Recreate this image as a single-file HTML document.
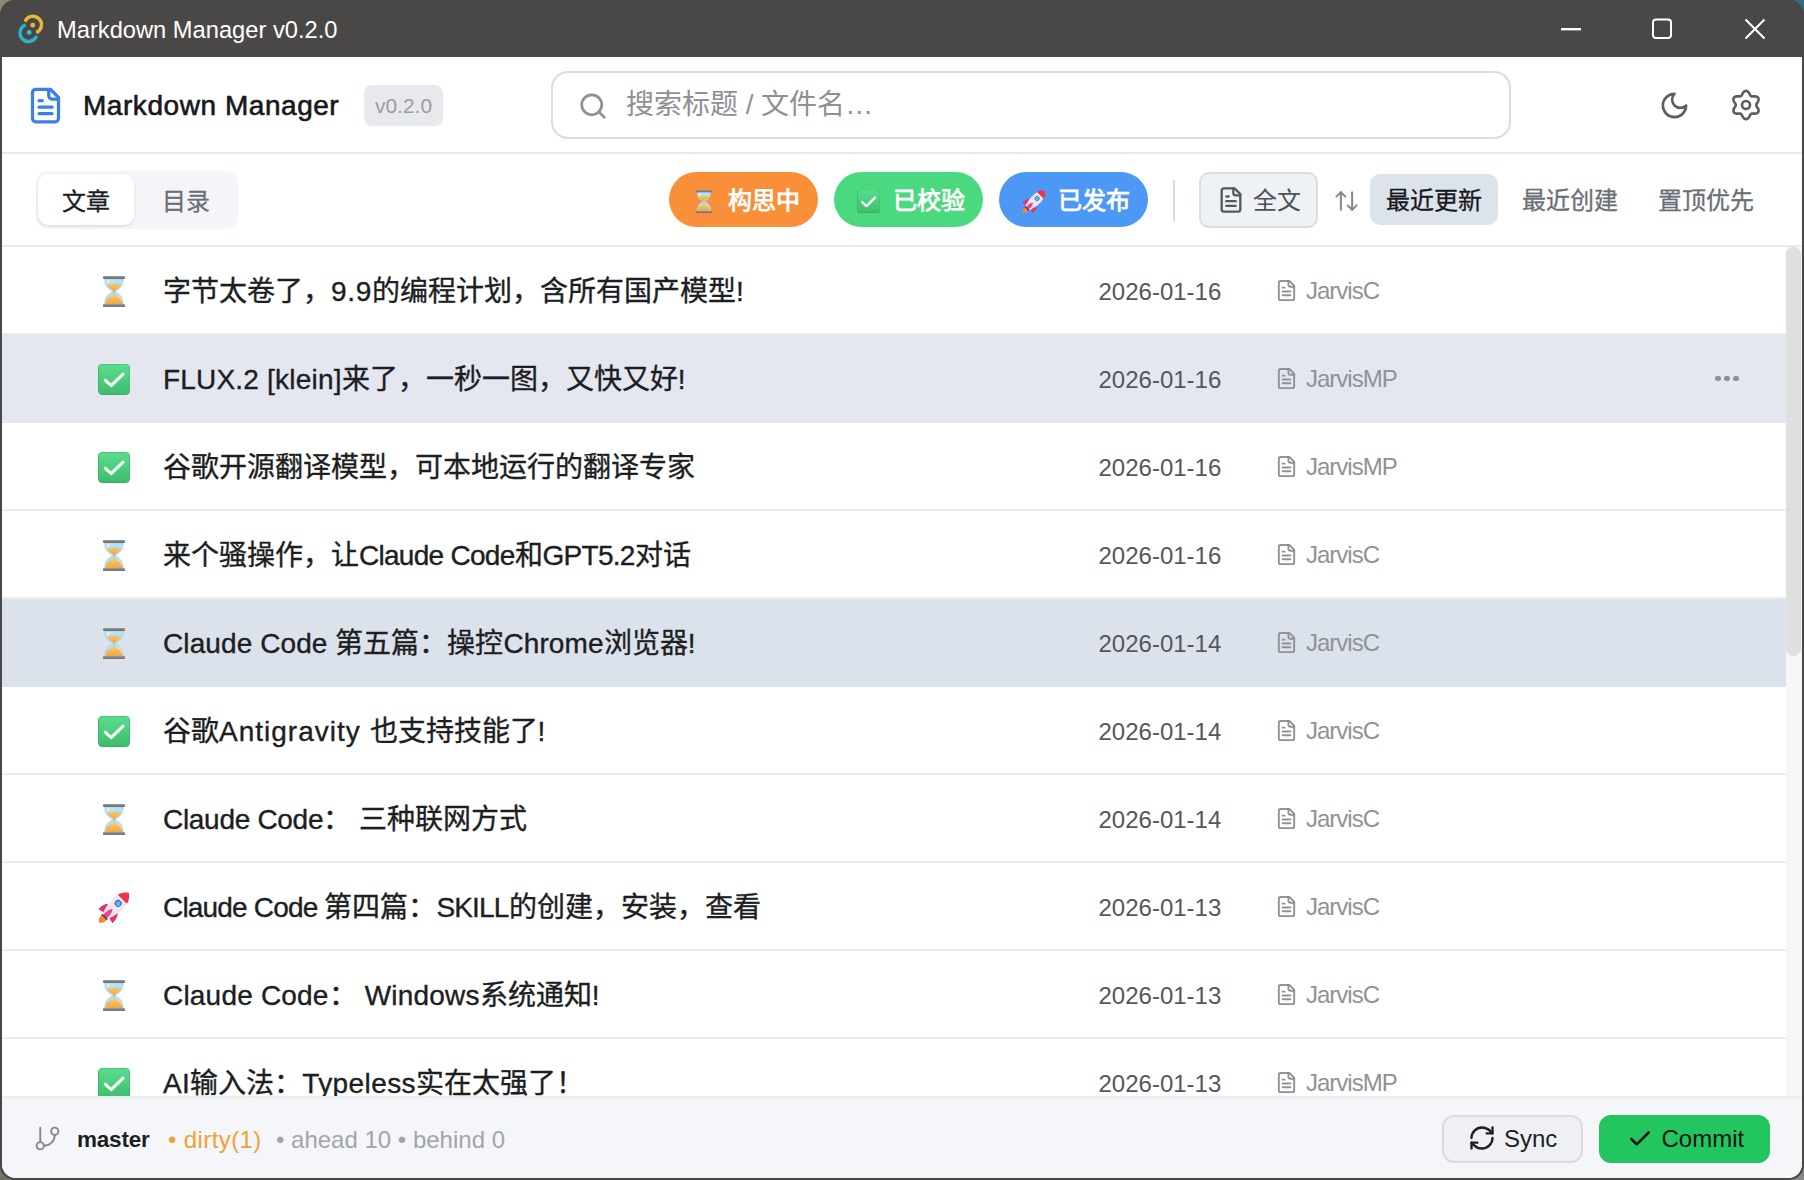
<!DOCTYPE html>
<html lang="zh-CN"><head><meta charset="utf-8">
<style>
*{box-sizing:border-box;margin:0;padding:0}
html,body{width:1804px;height:1180px;overflow:hidden}
body{background:#7d7a72;font-family:"Liberation Sans",sans-serif;position:relative}
.abs{position:absolute}
#win{position:absolute;left:0;top:0;width:1804px;height:1180px;background:#4a4846;border-radius:15px;overflow:hidden}
.cor{position:absolute;width:20px;height:20px}
#title{position:absolute;left:0;top:0;width:1804px;height:57px;background:#4a4846}
#title .t{position:absolute;left:57px;top:15px;font-size:23.7px;color:#fff;line-height:30px;white-space:nowrap}
#app{position:absolute;left:2px;top:57px;width:1800px;height:1121px;background:#fff;border-radius:0 0 14px 14px;overflow:hidden}
#hdr{position:absolute;left:0;top:0;width:1800px;height:97px;border-bottom:2px solid #e8e9eb}
#hdr .logo{position:absolute;left:24px;top:28.5px;width:39px;height:39px}
#hdr .name{position:absolute;left:81px;top:30px;font-size:28px;line-height:38px;font-weight:normal;-webkit-text-stroke:0.6px #16181c;color:#16181c;white-space:nowrap;letter-spacing:0.55px}
#hdr .badge{position:absolute;left:362px;top:28px;width:79px;height:41px;border-radius:8px;background:#e7e9ed;color:#9a9da3;font-size:21px;line-height:41px;text-align:center}
#search{position:absolute;left:549px;top:14px;width:960px;height:68px;border:2px solid #dcdcdc;border-radius:17px}
#search svg{position:absolute;left:24.5px;top:17.5px;width:30px;height:30px}
#search .ph{position:absolute;left:73px;top:14px;font-size:28px;line-height:36px;color:#8e9094;white-space:nowrap}
#hdr .moon{position:absolute;left:1656.5px;top:32.5px;width:31px;height:31px}
#hdr .gear{position:absolute;left:1728px;top:31.5px;width:32px;height:32px}
#tb{position:absolute;left:0;top:97px;width:1800px;height:93px;border-bottom:2px solid #eaebed}
.seg{position:absolute;left:33.5px;top:16.5px;width:202px;height:58px;border-radius:12px;background:#f4f5f8}
.seg .on{position:absolute;left:2px;top:3.5px;width:96.5px;height:51px;border-radius:10px;background:#fff;box-shadow:0 1px 3px rgba(0,0,0,.12)}
.seg .l1{position:absolute;left:26.5px;top:15.5px;font-size:24px;line-height:32px;color:#1b1d21;-webkit-text-stroke:0.3px #1b1d21}
.seg .l2{position:absolute;left:126.5px;top:15.5px;font-size:24px;line-height:32px;color:#6a6e75;-webkit-text-stroke:0.3px #6a6e75}
.pill{position:absolute;top:18px;width:149px;height:55px;border-radius:28px;color:#fff;font-weight:bold;font-size:24px;line-height:55px}
.pill svg{position:absolute}
.pill span{position:absolute;top:1px}
.sep{position:absolute;left:1171px;top:26px;width:2px;height:41px;background:#dadada}
.full{position:absolute;left:1197px;top:18px;width:119px;height:56px;border-radius:10px;background:#eef1f5;border:2px solid #d9dce1}
.full svg{position:absolute;left:16px;top:12px;width:28px;height:28px}
.full span{position:absolute;left:52px;top:11px;font-size:24px;line-height:32px;color:#4d5056}
.sorti{position:absolute;left:1331.3px;top:35.8px;width:27px;height:22px}
.sort{position:absolute;top:20px;height:51px;font-size:24px;line-height:53px;color:#6a6e75;white-space:nowrap;-webkit-text-stroke:0.3px #6a6e75}
.sort.on{background:#dde3eb;border-radius:10px;color:#17191d;padding:0 16px;-webkit-text-stroke:0.3px #17191d}
#list{position:absolute;left:0;top:190px;width:1784px;height:850px;overflow:hidden}
.row{position:absolute;left:0;width:1784px;height:88px;border-bottom:2px solid #ebecee}
.row.hla{background:#e4e7f0;border-bottom-color:#e4e7f0}
.row.hlb{background:#dce2eb;border-bottom-color:#dce2eb}
.row .ic{position:absolute;top:29px;height:31px}
.row .ic-hg{left:101px;width:22px}
.row .ic-ck{left:96px;width:32px}
.row .ic-rk{left:96px;width:32px}
.row .tt{position:absolute;left:161px;top:25px;font-size:28px;line-height:40px;color:#1c1e22;white-space:nowrap;-webkit-text-stroke:0.35px #1c1e22}
.row .dt{position:absolute;left:1096.5px;top:27.5px;font-size:24px;line-height:34px;color:#54575c;white-space:nowrap}
.row .au{position:absolute;left:1304px;top:27px;font-size:24px;line-height:34px;color:#8f9297;white-space:nowrap;letter-spacing:-1px}
.row .fi{position:absolute;left:1272.5px;top:31.5px;width:23px;height:23px;color:#8e9196}
.row .more{position:absolute;left:1711px;top:40.5px;width:30px;height:8px}
.row .more i{position:absolute;top:0;width:5.5px;height:5.5px;border-radius:3px;background:#8c9096}
.row .more i:nth-child(1){left:2px}.row .more i:nth-child(2){left:11px}.row .more i:nth-child(3){left:20px}
#sb{position:absolute;left:1784px;top:190px;width:16px;height:850px;background:#f6f6f9}
#sb i{position:absolute;left:0;top:0;width:15px;height:409px;border-radius:8px;background:#dfdfdf}
#foot{position:absolute;left:0;top:1039px;width:1800px;height:82px;background:#f5f6f9;border-top:2px solid #ebecef}
#foot .br{position:absolute;left:30.5px;top:25.5px;width:29px;height:29px}
#foot .m{position:absolute;left:75px;top:26px;font-size:22.5px;letter-spacing:-0.2px;line-height:32px;font-weight:bold;color:#1c1e22;white-space:nowrap}
#foot .d{position:absolute;left:166px;top:26px;font-size:24px;line-height:32px;color:#eea236;white-space:nowrap;letter-spacing:0.4px}
#foot .a{position:absolute;left:274px;top:26px;font-size:24px;line-height:32px;color:#a2a5aa;white-space:nowrap}
.btn{position:absolute;top:17px;height:48px;border-radius:12px;font-size:24px;line-height:44px;white-space:nowrap}
.btn.sync{left:1440px;width:141px;background:#eef0f4;border:2px solid #d9dce1;color:#1c1e22}
.btn.commit{left:1597px;width:171px;background:#22c55e;border:2px solid #22c55e;color:#14161a}
.btn svg{position:absolute;top:9px;width:26px;height:26px}
.btn span{position:absolute;top:0}
svg{overflow:visible}

</style></head><body>
<svg width="0" height="0" style="position:absolute"><defs>
<symbol id="ft" viewBox="0 0 24 24"><g fill="none" stroke="currentColor" stroke-width="2" stroke-linecap="round" stroke-linejoin="round"><path d="M15 2H6a2 2 0 0 0-2 2v16a2 2 0 0 0 2 2h12a2 2 0 0 0 2-2V7Z"/><path d="M14 2v4a2 2 0 0 0 2 2h4"/><path d="M10 9H8"/><path d="M16 13H8"/><path d="M16 17H8"/></g></symbol>
<linearGradient id="gck" x1="0" y1="0" x2="0" y2="1"><stop offset="0" stop-color="#5cdc8e"/><stop offset="1" stop-color="#3dbd6d"/></linearGradient>
<linearGradient id="gcap" x1="0" y1="0" x2="0" y2="1"><stop offset="0" stop-color="#9a9a9a"/><stop offset="1" stop-color="#6a6a6a"/></linearGradient>
<linearGradient id="gsand" x1="0" y1="0" x2="0" y2="1"><stop offset="0" stop-color="#f9c766"/><stop offset="1" stop-color="#f0a748"/></linearGradient>
<symbol id="hg" viewBox="0 0 22 31">
 <path d="M1.8 2.8 H20.2 V4.5 C20.2 10 16.8 13 12.2 15.5 C16.8 18 20.2 21 20.2 26.5 V28.2 H1.8 V26.5 C1.8 21 5.2 18 9.8 15.5 C5.2 13 1.8 10 1.8 4.5Z" fill="#b3e0fa" stroke="#a5cde6" stroke-width="0.5"/>
 <path d="M3.6 4 H8 C6 6 5 9 4.5 10 C4 8 3.6 6 3.6 4Z" fill="#def3ff" opacity=".8"/>
 <path d="M3.6 8.3 C8 7.5 14 7.5 18.4 8.3 C17.2 11 14.4 13 11 15 C7.6 13 4.8 11 3.6 8.3Z" fill="url(#gsand)"/>
 <rect x="10.6" y="14" width="0.8" height="6.5" fill="#eaa544"/>
 <path d="M2.4 28 C2.4 23.5 5.2 20.6 11 18.8 C16.8 20.6 19.6 23.5 19.6 28Z" fill="url(#gsand)"/>
 <path d="M14.5 20.2 C17 21.6 18.6 23.4 19.1 25.5" fill="none" stroke="#fff" stroke-width="1" opacity=".55"/>
 <rect x="0" y="0" width="22" height="2.9" rx="0.8" fill="url(#gcap)"/>
 <rect x="0" y="28.1" width="22" height="2.9" rx="0.8" fill="url(#gcap)"/>
</symbol>
<symbol id="ck" viewBox="0 0 32 31">
 <rect x="0" y="0" width="32" height="31" rx="4.5" fill="#37ad62"/>
 <rect x="0.8" y="0.4" width="30.8" height="29.6" rx="4" fill="url(#gck)"/>
 <path d="M7.3 16.3 L13.2 21.6 L25 10.2" fill="none" stroke="#f2fff6" stroke-width="3.2" stroke-linecap="round" stroke-linejoin="round"/>
</symbol>
<symbol id="rk" viewBox="0 0 32 31">
 <g transform="translate(16.6 15) rotate(45)">
  <path d="M-3.5 14.5 C-4 18.5 -1.5 21.5 0 22 C1.5 21.5 4 18.5 3.5 14.5Z" fill="#f28a2c"/>
  <path d="M-6.5 2 C-9 4.5 -10 8 -10 13 L-3.5 11.5Z" fill="#e3336c"/>
  <path d="M6.5 2 C9 4.5 10 8 10 13 L3.5 11.5Z" fill="#e3336c"/>
  <path d="M0 -20 C5 -17 7 -10 7 -3 C7 4 5.2 9 3.8 13.5 L-3.8 13.5 C-5.2 9 -7 4 -7 -3 C-7 -10 -5 -17 0 -20Z" fill="#efe7f0"/>
  <path d="M0 -20 C4 -17.5 5.8 -14 6.4 -11 L-6.4 -11 C-5.8 -14 -4 -17.5 0 -20Z" fill="#ea3450"/>
  <circle cx="0" cy="-5" r="2.9" fill="#62b6f5" stroke="#3060a8" stroke-width="1"/>
  <path d="M0 3 C2.2 5 2.8 9 2.5 14 L-2.5 14 C-2.8 9 -2.2 5 0 3Z" fill="#f0428f"/>
  <rect x="-3.8" y="13.3" width="7.6" height="1.6" fill="#7a2b50"/>
 </g>
</symbol>
</defs>
</svg>
<div class="cor" style="left:0;top:0;background:#8e8776"></div>
<div class="cor" style="right:0;top:0;background:#2f6d84"></div>
<div class="cor" style="left:0;bottom:0;background:#74716a"></div>
<div class="cor" style="right:0;bottom:0;background:#8a8985"></div>
<div id="win">
<div id="title">
  <svg class="abs" style="left:0;top:0" width="60" height="57" viewBox="0 0 60 57">
    <path d="M25.1 21.6 A8.5 8.5 0 1 1 36.3 32.6" fill="none" stroke="#e8b83a" stroke-width="3.4"/>
    <path d="M25.65 24.96 A8.5 8.5 0 1 0 36.5 35.9" fill="none" stroke="#27b4cc" stroke-width="3.4"/>
    <circle cx="32.8" cy="25.2" r="2.4" fill="#f0b82e"/>
    <circle cx="29.2" cy="32.4" r="2.4" fill="#2cc0d8"/>
  </svg>
  <div class="t">Markdown Manager v0.2.0</div>
  <svg class="abs" style="left:1556px;top:14px" width="30" height="30" viewBox="0 0 30 30"><rect x="5" y="14" width="20" height="2.4" fill="#fff"/></svg>
  <svg class="abs" style="left:1647px;top:14px" width="30" height="30" viewBox="0 0 30 30"><rect x="6" y="5.5" width="18" height="18.5" rx="3" fill="none" stroke="#fff" stroke-width="2"/></svg>
  <svg class="abs" style="left:1740px;top:14px" width="30" height="30" viewBox="0 0 30 30"><path d="M5.5 5.5 L24.5 24.5 M24.5 5.5 L5.5 24.5" stroke="#fff" stroke-width="2"/></svg>
</div>
<div id="app">
  <div id="hdr">
    <svg class="logo" viewBox="0 0 24 24" style="color:#3d7fe8"><use href="#ft"/></svg>
    <div class="name">Markdown Manager</div>
    <div class="badge">v0.2.0</div>
    <div id="search">
      <svg viewBox="0 0 24 24"><g fill="none" stroke="#8e9094" stroke-width="2.2" stroke-linecap="round"><circle cx="11" cy="11" r="8"/><path d="m21 21-4.3-4.3"/></g></svg>
      <div class="ph">搜索标题 / 文件名…</div>
    </div>
    <svg class="moon" viewBox="0 0 24 24"><path d="M12 3a6 6 0 0 0 9 9 9 9 0 1 1-9-9Z" fill="none" stroke="#5c5e62" stroke-width="2" stroke-linejoin="round"/></svg>
    <svg class="gear" viewBox="0 0 24 24"><g fill="none" stroke="#5c5e62" stroke-width="2" stroke-linejoin="round"><path d="M19.70 12.00 L19.73 12.27 L19.81 12.55 L19.93 12.83 L20.10 13.14 L20.30 13.46 L20.51 13.81 L20.73 14.18 L20.94 14.56 L21.13 14.97 L21.28 15.38 L21.38 15.79 L21.43 16.20 L21.41 16.59 L21.33 16.96 L21.18 17.30 L20.96 17.60 L20.68 17.86 L20.35 18.07 L19.97 18.23 L19.56 18.35 L19.13 18.42 L18.69 18.46 L18.25 18.47 L17.82 18.47 L17.42 18.45 L17.04 18.45 L16.69 18.45 L16.38 18.49 L16.10 18.56 L15.85 18.67 L15.63 18.83 L15.43 19.03 L15.24 19.29 L15.06 19.58 L14.88 19.92 L14.69 20.28 L14.48 20.65 L14.25 21.03 L14.00 21.39 L13.71 21.72 L13.41 22.02 L13.08 22.27 L12.73 22.45 L12.37 22.56 L12.00 22.60 L11.63 22.56 L11.27 22.45 L10.92 22.27 L10.59 22.02 L10.29 21.72 L10.00 21.39 L9.75 21.03 L9.52 20.65 L9.31 20.28 L9.12 19.92 L8.94 19.58 L8.76 19.29 L8.57 19.03 L8.37 18.83 L8.15 18.67 L7.90 18.56 L7.62 18.49 L7.31 18.45 L6.96 18.45 L6.58 18.45 L6.18 18.47 L5.75 18.47 L5.31 18.46 L4.87 18.42 L4.44 18.35 L4.03 18.23 L3.65 18.07 L3.32 17.86 L3.04 17.60 L2.82 17.30 L2.67 16.96 L2.59 16.59 L2.57 16.20 L2.62 15.79 L2.72 15.38 L2.87 14.97 L3.06 14.56 L3.27 14.18 L3.49 13.81 L3.70 13.46 L3.90 13.14 L4.07 12.83 L4.19 12.55 L4.27 12.27 L4.30 12.00 L4.27 11.73 L4.19 11.45 L4.07 11.17 L3.90 10.86 L3.70 10.54 L3.49 10.19 L3.27 9.82 L3.06 9.44 L2.87 9.03 L2.72 8.62 L2.62 8.21 L2.57 7.80 L2.59 7.41 L2.67 7.04 L2.82 6.70 L3.04 6.40 L3.32 6.14 L3.65 5.93 L4.03 5.77 L4.44 5.65 L4.87 5.58 L5.31 5.54 L5.75 5.53 L6.18 5.53 L6.58 5.55 L6.96 5.55 L7.31 5.55 L7.62 5.51 L7.90 5.44 L8.15 5.33 L8.37 5.17 L8.57 4.97 L8.76 4.71 L8.94 4.42 L9.12 4.08 L9.31 3.72 L9.52 3.35 L9.75 2.97 L10.00 2.61 L10.29 2.28 L10.59 1.98 L10.92 1.73 L11.27 1.55 L11.63 1.44 L12.00 1.40 L12.37 1.44 L12.73 1.55 L13.08 1.73 L13.41 1.98 L13.71 2.28 L14.00 2.61 L14.25 2.97 L14.48 3.35 L14.69 3.72 L14.88 4.08 L15.06 4.42 L15.24 4.71 L15.43 4.97 L15.63 5.17 L15.85 5.33 L16.10 5.44 L16.38 5.51 L16.69 5.55 L17.04 5.55 L17.42 5.55 L17.82 5.53 L18.25 5.53 L18.69 5.54 L19.13 5.58 L19.56 5.65 L19.97 5.77 L20.35 5.93 L20.68 6.14 L20.96 6.40 L21.18 6.70 L21.33 7.04 L21.41 7.41 L21.43 7.80 L21.38 8.21 L21.28 8.62 L21.13 9.03 L20.94 9.44 L20.73 9.82 L20.51 10.19 L20.30 10.54 L20.10 10.86 L19.93 11.17 L19.81 11.45 L19.73 11.73Z"/><circle cx="12" cy="12" r="3"/></g></svg>
  </div>
  <div id="tb">
    <div class="seg"><div class="on"></div><div class="l1">文章</div><div class="l2">目录</div></div>
    <div class="pill" style="left:667px;background:#fa8f3a"><svg style="left:27px;top:18px;width:16px;height:23px" viewBox="0 0 22 31" preserveAspectRatio="none"><use href="#hg"/></svg><span style="left:59px">构思中</span></div>
    <div class="pill" style="left:832px;background:#4bd97f"><svg style="left:23px;top:18px;width:23px;height:23px" viewBox="0 0 32 31" preserveAspectRatio="none"><use href="#ck"/></svg><span style="left:59px">已校验</span></div>
    <div class="pill" style="left:997px;background:#4d97f5"><svg style="left:23px;top:18px;width:24px;height:23px" viewBox="0 0 32 31" preserveAspectRatio="none"><use href="#rk"/></svg><span style="left:59px">已发布</span></div>
    <div class="sep"></div>
    <div class="full"><svg viewBox="0 0 24 24" style="color:#55585d"><use href="#ft"/></svg><span>全文</span></div>
    <svg class="sorti" viewBox="0 0 24 20" preserveAspectRatio="none"><g fill="none" stroke="#85888d" stroke-width="1.8" stroke-linecap="round" stroke-linejoin="round"><path d="m3 6 4-4 4 4"/><path d="M7 2v16"/><path d="m21 14-4 4-4-4"/><path d="M17 18V2"/></g></svg>
    <div class="sort on" style="left:1368px">最近更新</div>
    <div class="sort" style="left:1520px">最近创建</div>
    <div class="sort" style="left:1656px">置顶优先</div>
  </div>
  <div id="list">
<div class="row" style="top:0px"><svg class="ic ic-hg"><use href="#hg"/></svg><div class="tt">字节太卷了，<span style="letter-spacing:0.7px">9.9</span>的编程计划，含所有国产模型<span style="letter-spacing:0.7px">!</span></div><div class="dt">2026-01-16</div><svg class="fi" viewBox="0 0 24 24"><use href="#ft"/></svg><div class="au">JarvisC</div></div>
<div class="row hla" style="top:88px"><svg class="ic ic-ck"><use href="#ck"/></svg><div class="tt"><span style="letter-spacing:0.2px">FLUX.2 [klein]</span>来了，一秒一图，又快又好<span style="letter-spacing:0.2px">!</span></div><div class="dt">2026-01-16</div><svg class="fi" viewBox="0 0 24 24"><use href="#ft"/></svg><div class="au">JarvisMP</div><div class="more"><i></i><i></i><i></i></div></div>
<div class="row" style="top:176px"><svg class="ic ic-ck"><use href="#ck"/></svg><div class="tt">谷歌开源翻译模型，可本地运行的翻译专家</div><div class="dt">2026-01-16</div><svg class="fi" viewBox="0 0 24 24"><use href="#ft"/></svg><div class="au">JarvisMP</div></div>
<div class="row" style="top:264px"><svg class="ic ic-hg"><use href="#hg"/></svg><div class="tt">来个骚操作，让<span style="letter-spacing:-0.72px">Claude Code</span>和<span style="letter-spacing:-0.72px">GPT5.2</span>对话</div><div class="dt">2026-01-16</div><svg class="fi" viewBox="0 0 24 24"><use href="#ft"/></svg><div class="au">JarvisC</div></div>
<div class="row hlb" style="top:352px"><svg class="ic ic-hg"><use href="#hg"/></svg><div class="tt"><span style="letter-spacing:0.1px">Claude Code </span>第五篇：操控<span style="letter-spacing:0.1px">Chrome</span>浏览器<span style="letter-spacing:0.1px">!</span></div><div class="dt">2026-01-14</div><svg class="fi" viewBox="0 0 24 24"><use href="#ft"/></svg><div class="au">JarvisC</div></div>
<div class="row" style="top:440px"><svg class="ic ic-ck"><use href="#ck"/></svg><div class="tt">谷歌<span style="letter-spacing:1.0px">Antigravity </span>也支持技能了<span style="letter-spacing:1.0px">!</span></div><div class="dt">2026-01-14</div><svg class="fi" viewBox="0 0 24 24"><use href="#ft"/></svg><div class="au">JarvisC</div></div>
<div class="row" style="top:528px"><svg class="ic ic-hg"><use href="#hg"/></svg><div class="tt"><span style="letter-spacing:-0.3px">Claude Code</span>：<span style="letter-spacing:-0.3px"> </span>三种联网方式</div><div class="dt">2026-01-14</div><svg class="fi" viewBox="0 0 24 24"><use href="#ft"/></svg><div class="au">JarvisC</div></div>
<div class="row" style="top:616px"><svg class="ic ic-rk"><use href="#rk"/></svg><div class="tt"><span style="letter-spacing:-0.82px">Claude Code </span>第四篇：<span style="letter-spacing:-0.82px">SKILL</span>的创建，安装，查看</div><div class="dt">2026-01-13</div><svg class="fi" viewBox="0 0 24 24"><use href="#ft"/></svg><div class="au">JarvisC</div></div>
<div class="row" style="top:704px"><svg class="ic ic-hg"><use href="#hg"/></svg><div class="tt"><span style="letter-spacing:0.2px">Claude Code</span>：<span style="letter-spacing:0.2px"> Windows</span>系统通知<span style="letter-spacing:0.2px">!</span></div><div class="dt">2026-01-13</div><svg class="fi" viewBox="0 0 24 24"><use href="#ft"/></svg><div class="au">JarvisC</div></div>
<div class="row" style="top:792px"><svg class="ic ic-ck"><use href="#ck"/></svg><div class="tt"><span style="letter-spacing:0.4px">AI</span>输入法：<span style="letter-spacing:0.4px">Typeless</span>实在太强了！</div><div class="dt">2026-01-13</div><svg class="fi" viewBox="0 0 24 24"><use href="#ft"/></svg><div class="au">JarvisMP</div></div>
  </div>
  <div id="sb"><i></i></div>
  <div id="foot">
    <svg class="br" viewBox="0 0 24 24"><g fill="none" stroke="#85888d" stroke-width="1.6" stroke-linecap="round"><line x1="6" x2="6" y1="3" y2="15"/><circle cx="18" cy="6" r="3"/><circle cx="6" cy="18" r="3"/><path d="M18 9a9 9 0 0 1-9 9"/></g></svg>
    <div class="m">master</div>
    <div class="d">• dirty(1)</div>
    <div class="a">• ahead 10 • behind 0</div>
    <div class="btn sync"><svg style="left:24px;top:7px;width:28px;height:28px" viewBox="0 0 24 24"><g fill="none" stroke="#1c1e22" stroke-width="2" stroke-linecap="round" stroke-linejoin="round"><path d="M3 12a9 9 0 0 1 9-9 9.75 9.75 0 0 1 6.74 2.74L21 8"/><path d="M21 3v5h-5"/><path d="M21 12a9 9 0 0 1-9 9 9.75 9.75 0 0 1-6.74-2.74L3 16"/><path d="M8 16H3v5"/></g></svg><span style="left:60px">Sync</span></div>
    <div class="btn commit"><svg style="left:26px" viewBox="0 0 24 24"><path d="M20 6 9 17l-5-5" fill="none" stroke="#14161a" stroke-width="2.4" stroke-linecap="round" stroke-linejoin="round"/></svg><span style="left:60.5px">Commit</span></div>
  </div>
</div>

</div>

</body></html>
